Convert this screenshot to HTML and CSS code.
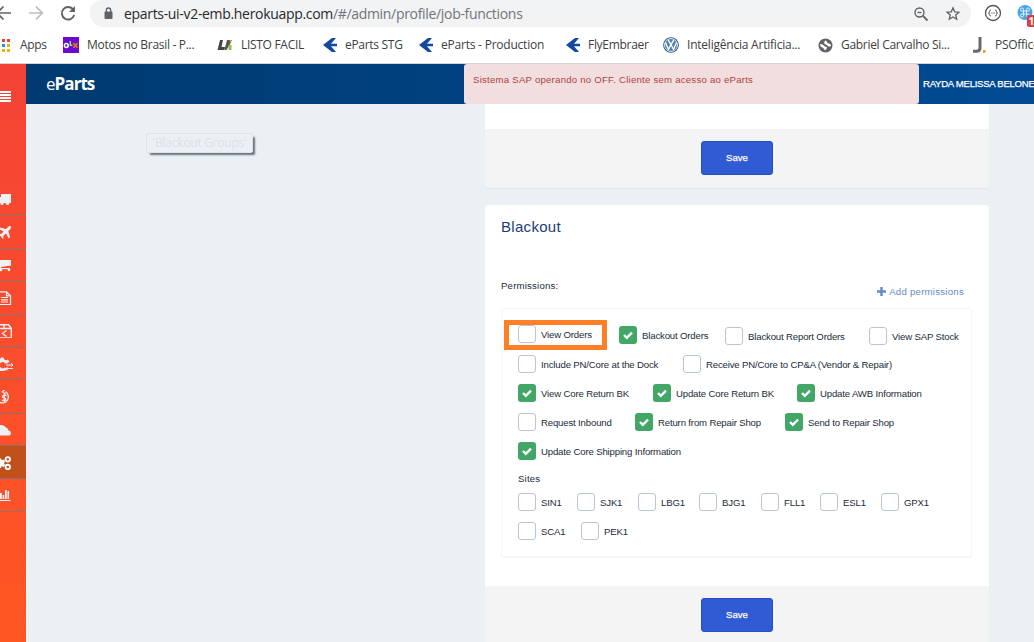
FILE: index.html
```
<!DOCTYPE html>
<html lang="pt-BR">
<head>
<meta charset="utf-8">
<title>eParts</title>
<link rel="stylesheet" href="styles.css">
</head>
<body>
<svg class="defs" width="0" height="0">
  <symbol id="swallow" viewBox="0 0 14 16"><path d="M0 8 9 1l4 0-5 5.800h6v2.400H8l5 5.800H9z" fill="#1248a0"/></symbol>
  <symbol id="check" viewBox="0 0 18 18"><path d="M5 9l2.800 2.800L13 6.600" fill="none" stroke="#fff" stroke-width="2.400"/></symbol>
</svg>
<header class="browser">
  <div class="toolbar">
    <div class="nav">
      <svg width="90" height="27" viewBox="0 0 90 27" fill="none" stroke-width="1.700">
        <path d="M11 13H-3M3.500 6.500-3 13l6.500 6.500" stroke="#5f6368"/>
        <path d="M29 13h13M36 6.700 42.300 13 36 19.300" stroke="#bbbdc0"/>
        <path d="M73.300 9.600A6.300 6.300 0 1 0 74.200 15" stroke="#5f6368" stroke-width="1.900"/>
        <path d="M75 6v6h-6z" fill="#5f6368"/>
      </svg>
    </div>
    <div class="omnibox">
      <svg width="10" height="13" viewBox="0 0 10 13"><rect x="0.500" y="4.500" width="8" height="7.500" rx="1" fill="#5f6368"/><path d="M2.300 5V3.200a2.200 2.200 0 0 1 4.400 0V5" fill="none" stroke="#5f6368" stroke-width="1.300"/></svg>
      <span class="url"><b>eparts-ui-v2-emb.herokuapp.com</b>/#/admin/profile/job-functions</span>
      <svg width="46" height="16" viewBox="0 0 46 16" fill="none" stroke="#5f6368" stroke-width="1.400"><circle cx="5.500" cy="6.500" r="4.500"/><path d="M8.700 9.700 13.500 14.500" stroke-width="1.800"/><path d="M3.500 6.500h4"/><path d="M39 1.800l1.700 4 4.300.4-3.300 2.800 1 4.200-3.700-2.300-3.700 2.300 1-4.200L33 6.200l4.300-.4z" stroke-width="1.300"/></svg>
    </div>
    <svg class="ext" width="63" height="27" viewBox="0 0 63 27">
      <circle cx="22" cy="13" r="7.500" fill="none" stroke="#555" stroke-width="1.300"/>
      <path d="M20 10q-1.500 0-1.500 1.500T17.500 13q1 0 1 1.500T20 16M24 10q1.500 0 1.500 1.500T26.500 13q-1 0-1 1.500T24 16" fill="none" stroke="#555"/>
      <path d="M20.300 13h3.500" stroke="#555" stroke-dasharray="1 .4"/>
      <circle cx="54" cy="12.500" r="7.500" fill="#4aa5e8"/>
      <path d="M52.500 11h3v3h-3zM52.500 11h-1.500a1.500 1.500 0 1 1 1.500-1.500zM55.500 11v-1.500a1.500 1.500 0 1 1 1.500 1.500zM52.500 14v1.500a1.500 1.500 0 1 1-1.500-1.500zM55.500 14h1.500a1.500 1.500 0 1 1-1.500 1.500z" fill="none" stroke="#d9efff"/>
      <rect x="56" y="15" width="10" height="12" rx="2" fill="#d93f45"/>
      <text x="57.500" y="25" class="badge">1</text>
    </svg>
  </div>
  <nav class="bookmarks">
    <a class="apps"><svg width="12" height="14" viewBox="0 0 12 14"><path d="M-3 1h3v3h-3zM2 1h3v3H2zM7 1h3v3H7z" fill="#ea4335"/><path d="M2 6h3v3H2z" fill="#2a8cf0"/><path d="M7 6h3v3H7zM2 11h3v3H2zM7 11h3v3H7z" fill="#f6b10c"/></svg><span>Apps</span></a>
    <a><svg width="16" height="16" viewBox="0 0 16 16"><rect width="16" height="16" fill="#6a0bd1"/><circle cx="3.300" cy="8.500" r="1.900" fill="none" stroke="#fff" stroke-width="1.500"/><path d="M7.300 4v4.200h2.200" stroke="#8ce563" stroke-width="1.500" fill="none"/><path d="M10.500 6.200l4 4.500M14.500 6.200l-4 4.500" stroke="#f28000" stroke-width="1.500"/></svg><span>Motos no Brasil - P...</span></a>
    <a><svg width="16" height="14" viewBox="0 0 16 14"><path d="M3 2h3L4.500 9H8l-.6 3H.5z" fill="#444"/><path d="M10 2h5l-2 4-3.500 6h-2z" fill="#555"/><path d="M11.500 7h3v5h-3z" fill="#8bc34a"/><path d="M12.500 2h2l-1 3z" fill="#f59a23"/></svg><span>LISTO FACIL</span></a>
    <a><svg width="14" height="16"><use href="#swallow"/></svg><span>eParts STG</span></a>
    <a><svg width="14" height="16"><use href="#swallow"/></svg><span class="wide">eParts - Production</span></a>
    <a><svg width="14" height="16"><use href="#swallow"/></svg><span>FlyEmbraer</span></a>
    <a><svg width="16" height="16" viewBox="0 0 16 16"><circle cx="8" cy="8" r="7.800" fill="#264f78"/><circle cx="8" cy="8" r="6.500" fill="#5584ad" stroke="#dce8f2"/><path d="M5 2.700l3 5 3-5M2.500 5.500l3 7 2.500-5 2.500 5 3-7" fill="none" stroke="#fff" stroke-width="1.300"/></svg><span class="wide">Inteligência Artificia...</span></a>
    <a><svg width="15" height="15" viewBox="0 0 15 15"><circle cx="7.500" cy="7.500" r="7" fill="#5f6368"/><path d="M2 6q3 0 4 1.500T9 9q0 2-2 3.500-1-2-2.500-3Q2 9 2 6zM7 2.500q2 0 2 1.500t2 1.500q2 0 2 2.500-2 1-3 0T8 6.500 6 5z" fill="#fff"/></svg><span>Gabriel Carvalho Si...</span></a>
    <a><svg width="14" height="16" viewBox="0 0 14 16"><path d="M7 0v11q0 3.300-3.500 3.300H0" fill="none" stroke="#666b70" stroke-width="3"/><path d="M10 13h3l-1 3h-2z" fill="#f39b2d"/></svg><span>PSOffice</span></a>
  </nav>
</header>
<div class="app">
  <aside class="sidebar">
    <div class="burger"><i></i><i></i><i></i><i></i></div>
    <ul>
      <li><svg viewBox="0 0 14 14"><path d="M1 2h10v9H1zM-3 5h4v6h-4z"/><circle cx="2" cy="11.500" r="1.600"/><circle cx="7.500" cy="11.500" r="1.600"/></svg></li>
      <li><svg viewBox="0 0 14 14"><path d="M10.800 1.200q-1.500-.6-3 1L6 4-1 2.200-2 3.500 3.500 6.500 1.300 9-1 8.700-2 9.800l3 1.500L2.500 14l1-1-.2-2.300L6 8.500l2.800 5L10 12.300 8.300 6l1.800-1.800q1.500-1.500.7-3z"/></svg></li>
      <li><svg viewBox="0 0 14 14"><path d="M-3 2h14v5.500L1 9v1h9v1.200H0V3h-3z"/><circle cx="1" cy="12" r="1.300"/><circle cx="9" cy="12" r="1.300"/></svg></li>
      <li><svg viewBox="0 0 14 14"><path d="M-2 .8h8.500l4 4v8.700H-2M6.500 .8v4h4M1 6.500h7M1 8.800h7M1 11h7" fill="none" stroke="#edf0f5" stroke-width="1.200"/></svg></li>
      <li><svg viewBox="0 0 14 14"><path d="M-2 4.500h13.300V13q0 1-1 1H-2M-2 .8H8.500l2.800 3.700M4 .8v3.700M6.500 6.500L2.500 9.500l4 3" fill="none" stroke="#edf0f5" stroke-width="1.400"/></svg></li>
      <li><svg viewBox="0 0 14 14"><path d="M-2 2.500l2-.3L1 .5h2.500l.8 2 2 .8L8 2.500 9.500 5 7 6.500H5A3 3 0 1 0 4.500 10.500L7 12l-1 1.500L4.500 13.500 3 14H0z"/><path d="M6 8h7M11 6l2 2-2 2M13 11.500H6M8 9.500l-2 2 2 2" fill="none" stroke="#edf0f5"/></svg></li>
      <li><svg viewBox="0 0 14 14"><path d="M5.500 1.700A6 6 0 1 1-1 12M5.500-1 2.500 1.700l3 2.600" fill="none" stroke="#edf0f5" stroke-width="1.300"/><path d="M6.500 5.300H3.800q-1.300 0-1.300 1.200T4 7.700t1.700 1.300-1.500 1.400H2M4.200 4v7.800" fill="none" stroke="#edf0f5" stroke-width="1.200"/></svg></li>
      <li><svg viewBox="0 0 14 14"><path d="M-3 12.500H9q2-.2 2-2.500T8.500 7.500Q8 5 6 4.500 4.500 2 1.500 2H-3z"/></svg></li>
      <li class="active"><svg viewBox="0 0 14 14"><path d="M-1 2.500h2l.6 1.800L3.500 3.500l1.500 1.500-.8 2 .8 2.500-1.500 1.500-2-.9L1 12h-2V9.500q2-2 0-4z"/><circle cx="7.800" cy="3.300" r="2.200" fill="none" stroke="#fff" stroke-width="1.900"/><circle cx="7.800" cy="11" r="2.200" fill="none" stroke="#fff" stroke-width="1.900"/></svg></li>
      <li><svg viewBox="0 0 14 14"><path d="M0 5h1.800v6H0zM2.500 7h1.800v4H2.500zM5 2h1.800v9H5zM7.500 3h1.600v8H7.500zM-2 12h12.500v1H-2z"/></svg></li>
    </ul>
  </aside>
  <div class="page">
    <div class="topbar">
      <div class="logo"><span>e</span>Parts</div>
      <div class="alert">Sistema SAP operando no OFF. Cliente sem acesso ao eParts</div>
      <div class="user">RAYDA MELISSA BELONE</div>
    </div>
    <main class="content">
      <div class="ghost">'Blackout Groups'</div>
      <div class="cards">
        <section class="card first">
          <footer><button>Save</button></footer>
        </section>
        <section class="card second">
          <h2>Blackout</h2>
          <div class="heading"><span>Permissions:</span><a><svg width="9" height="9" viewBox="0 0 9 9"><path d="M3.300 0h2.400v3.300H9v2.400H5.700V9H3.300V5.700H0V3.300h3.300z"/></svg>Add permissions</a></div>
          <div class="panel">
            <div class="row r1"><label class="raised"><i></i><span>View Orders</span></label><label><i class="on"><svg><use href="#check"/></svg></i><span>Blackout Orders</span></label><label class="low"><i></i><span>Blackout Report Orders</span></label><label class="low"><i></i><span>View SAP Stock</span></label></div>
            <div class="row r2"><label><i></i><span>Include PN/Core at the Dock</span></label><label><i></i><span>Receive PN/Core to CP&amp;A (Vendor &amp; Repair)</span></label></div>
            <div class="row r3"><label><i class="on"><svg><use href="#check"/></svg></i><span>View Core Return BK</span></label><label><i class="on"><svg><use href="#check"/></svg></i><span>Update Core Return BK</span></label><label><i class="on"><svg><use href="#check"/></svg></i><span>Update AWB Information</span></label></div>
            <div class="row r4"><label><i></i><span>Request Inbound</span></label><label><i class="on"><svg><use href="#check"/></svg></i><span>Return from Repair Shop</span></label><label><i class="on"><svg><use href="#check"/></svg></i><span>Send to Repair Shop</span></label></div>
            <div class="row r5"><label><i class="on"><svg><use href="#check"/></svg></i><span>Update Core Shipping Information</span></label></div>
            <div class="sites">Sites</div>
            <div class="row s1"><label><i></i><span>SIN1</span></label><label><i></i><span>SJK1</span></label><label><i></i><span>LBG1</span></label><label><i></i><span>BJG1</span></label><label><i></i><span>FLL1</span></label><label><i></i><span>ESL1</span></label><label><i></i><span>GPX1</span></label></div>
            <div class="row s2"><label><i></i><span>SCA1</span></label><label><i></i><span>PEK1</span></label></div>
            <div class="marker"></div>
          </div>
          <footer><button>Save</button></footer>
        </section>
      </div>
    </main>
  </div>
</div>
</body>
</html>
```
FILE: styles.css
```
* { box-sizing: border-box; }
body { margin: 0; width: 1034px; height: 642px; overflow: hidden; display: flex; flex-direction: column; font-family: "Liberation Sans", Arial, sans-serif; background: #ebf0f5; }
.defs { display: none; }
svg { flex: none; }

/* Browser chrome */
.browser { height: 64px; flex: none; background: #fff; border-bottom: 1px solid #d5d7da; font-family: "Open Sans", "Noto Sans", sans-serif; }
.toolbar { display: flex; height: 27px; }
.nav { width: 90px; }
.nav svg { display: block; }
.omnibox { width: 881px; height: 27px; display: flex; align-items: center; padding: 0 11px 0 14px; background: #f1f3f4; border-radius: 12px 14px 14px 14px; }
.url { flex: 1; margin-left: 10px; font-size: 14px; letter-spacing: -0.32px; color: #70757a; white-space: nowrap; }
.url b { font-weight: 400; color: #27292c; }
.badge { font: 700 10px "Open Sans", sans-serif; fill: #fff; }
.bookmarks { display: grid; grid-template-columns: 63px 154px 106px 96px 147px 97px 155px 155px 61px; height: 36px; align-items: center; }
.bookmarks a { display: flex; align-items: center; font-size: 12px; letter-spacing: -0.3px; color: #3c4043; white-space: nowrap; min-width: 0; }
.bookmarks span { margin: -1px 0 0 8px; }
.bookmarks .wide { letter-spacing: -0.22px; }

.app { display: flex; flex: 1; min-height: 0; }

/* Sidebar */
.sidebar { width: 26px; flex: none; background: linear-gradient(#f44336, #ff5722); }
.burger { display: flex; flex-direction: column; gap: 1px; padding-top: 27px; height: 119px; }
.burger i { width: 11px; height: 2px; background: #fff; }
.sidebar ul { list-style: none; margin: 0; padding: 0; }
.sidebar li { height: 32.9px; display: flex; align-items: center; padding-top: 1px; border-bottom: 1px solid #91706a; }
.sidebar svg { width: 14px; height: 14px; fill: #edf0f5; }
.sidebar .active { background: #c1501b; }
.sidebar .active svg { fill: #fff; }

/* Top bar */
.page { flex: 1; display: flex; flex-direction: column; min-width: 0; }
.topbar { height: 40px; flex: none; display: flex; background: linear-gradient(90deg, #003a70, #004b93); color: #fff; }
.topbar > * { flex: none; }
.logo { width: 438px; padding: 9px 0 0 20px; font: 700 17px/22px "Open Sans", sans-serif; letter-spacing: -0.95px; }
.logo span { font-weight: 400; }
.alert { width: 455px; padding: 10px 9px; font-size: 9.6px; line-height: 12px; letter-spacing: 0.24px; color: #a94442; background: #f2dede; border-radius: 3px; white-space: nowrap; }
.user { width: 115px; padding: 14px 0 0 4px; font-size: 9.6px; line-height: 12px; letter-spacing: -0.28px; -webkit-text-stroke: 0.25px #fff; white-space: nowrap; }

/* Content */
.content { flex: 1; display: flex; min-height: 0; overflow: hidden; }
.ghost { width: 107px; height: 20px; margin: 29px 232px 0 120px; border: 1px solid #dee3e7; border-radius: 2px; box-shadow: 3px 3px 2px -1px #6a7176; background: #ebf0f5; color: #dce1e6; font: 12px/18px "Open Sans", sans-serif; letter-spacing: -0.25px; text-align: center; white-space: nowrap; }
.cards { width: 504px; }
.card { background: #fff; display: flex; flex-direction: column; box-shadow: 0 1px 1px rgba(0, 0, 0, .05); }
.first { height: 84px; padding-top: 25px; border-radius: 0 0 4px 4px; }
.second { margin-top: 17px; height: 470px; border-radius: 4px 4px 0 0; }
.card footer { flex: 1; background: #f4f4f4; padding-top: 12px; text-align: center; border-radius: 0 0 4px 4px; }
.card button { display: inline-block; width: 72px; height: 34px; padding: 0 0 2px; border: 1px solid #264fc4; border-radius: 3px; background: #305bd5; color: #fff; font: 9.6px "Liberation Sans", sans-serif; -webkit-text-stroke: 0.25px #fff; }
.card h2 { margin: 12px 0 0 16px; font-size: 15px; line-height: 20px; font-weight: 400; letter-spacing: 0.3px; color: #1a3c78; }
.heading { display: flex; justify-content: space-between; height: 20px; margin: 42px 25px 0 16px; font-size: 9.6px; color: #222b38; }
.heading span { padding-top: 1px; letter-spacing: 0.2px; }
.heading a { display: flex; align-items: center; gap: 3px; margin-top: 5px; height: 15px; color: #6389c9; letter-spacing: 0.26px; }
.heading svg { fill: #6389c9; }
.panel { position: relative; height: 250px; margin: 9px 17px 28px 16px; padding: 17px 0 0 16px; border: 1px solid #f4f5f6; border-bottom-width: 2px; border-radius: 4px; flex: none; }
.row { display: grid; height: 29px; align-items: start; font-size: 9.6px; letter-spacing: -0.16px; color: #222b38; }
.row label { display: flex; align-items: center; gap: 5px; height: 18px; white-space: nowrap; }
.row span { padding-top: 1px; }
.row i { width: 18px; height: 18px; flex: none; border: 1px solid #b8c5d9; border-radius: 3px; background: #fff; }
.row .on { border: 0; background: #41a666; }
.row i svg { display: block; width: 18px; height: 18px; }
.row .raised { margin-top: -1px; }
.row .low { margin-top: 1px; }
.r1 { grid-template-columns: 101px 106px 144px auto; }
.r2 { grid-template-columns: 165px auto; }
.r3 { grid-template-columns: 135px 144px auto; }
.r4 { grid-template-columns: 117px 150px auto; }
.sites { height: 22px; font-size: 9.6px; line-height: 16px; letter-spacing: 0.2px; color: #222b38; }
.s1 { grid-template-columns: 59px 61px 61px 62px 59px 61px auto; }
.s2 { grid-template-columns: 63px auto; }
.marker { position: absolute; left: 2px; top: 11px; width: 103px; height: 30px; border: 5px solid #ff7f27; }
```
